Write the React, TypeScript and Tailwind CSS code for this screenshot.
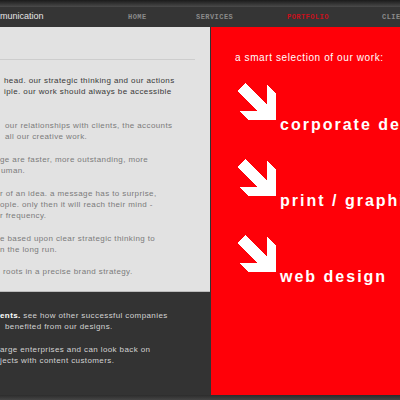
import React from "react";

const Arrow = () => (
  <svg
    width="40"
    height="38"
    viewBox="0 0 40 38"
    shapeRendering="crispEdges"
    className="block shrink-0"
  >
    <polygon
      points="8,0 30,22 30,2 39,11 39,37 11,37 2,28 20,28 0,8"
      fill="#ffffff"
    />
  </svg>
);

const works = ["corporate design", "print / graphics", "web design"];

type Line = { text: React.ReactNode; pl: string };

const intro: Line[][] = [
  [
    { text: "head. our strategic thinking and our actions", pl: "pl-[4px]" },
    { text: "iple. our work should always be accessible", pl: "pl-[4px]" },
  ],
];

const body: Line[][] = [
  [
    { text: "our relationships with clients, the accounts", pl: "pl-[5px]" },
    { text: "all our creative work.", pl: "pl-[5px]" },
  ],
  [
    { text: "ge are faster, more outstanding, more", pl: "pl-0" },
    { text: "uman.", pl: "pl-[1px]" },
  ],
  [
    { text: "r of an idea. a message has to surprise,", pl: "pl-0" },
    { text: "ople. only then it will reach their mind -", pl: "pl-0" },
    { text: "r frequency.", pl: "pl-0" },
  ],
  [
    { text: "e based upon clear strategic thinking to", pl: "pl-0" },
    { text: "n the long run.", pl: "pl-0" },
  ],
  [{ text: "roots in a precise brand strategy.", pl: "pl-[3px]" }],
];

const clients: Line[][] = [
  [
    {
      text: (
        <>
          <span className="font-bold text-white">ents.</span> see how other
          successful companies
        </>
      ),
      pl: "pl-0",
    },
    { text: "benefited from our designs.", pl: "pl-[5px]" },
  ],
  [
    { text: "arge enterprises and can look back on", pl: "pl-0" },
    { text: "jects with content customers.", pl: "pl-0" },
  ],
];

const Para = ({ lines, className }: { lines: Line[]; className: string }) => (
  <div className={className}>
    {lines.map((l, i) => (
      <div key={i} className={`whitespace-nowrap ${l.pl}`}>
        {l.text}
      </div>
    ))}
  </div>
);

export default function App() {
  return (
    <div className="w-[400px] h-[400px] overflow-hidden bg-[#333333] font-['Liberation_Sans',Arial,sans-serif]">
      {/* top shading */}
      <div className="h-[7px] bg-gradient-to-b from-[#1b1b1b] to-[#4b4b4b]" />

      {/* navigation */}
      <header className="h-[20px] bg-[#353535] flex items-center whitespace-nowrap overflow-hidden">
        <div className="w-[128px] shrink-0 text-[9px] text-[#e6e6e6]">munication</div>
        <nav className="flex font-['Liberation_Mono',monospace] text-[7px] font-bold tracking-[0.45px] leading-none">
          <a className="w-[68px] shrink-0 text-[#8a8a8a]">HOME</a>
          <a className="w-[91px] shrink-0 text-[#8a8a8a]">SERVICES</a>
          <a className="w-[95px] shrink-0 text-[#c8101c]">PORTFOLIO</a>
          <a className="shrink-0 text-[#8a8a8a]">CLIENTS</a>
        </nav>
      </header>

      <main className="flex h-[368px]">
        {/* left column */}
        <div className="w-[210px] shrink-0 flex flex-col">
          <section className="h-[265px] bg-[#e2e2e2] border-b border-[#bcbcbc] pt-[32px] overflow-hidden">
            <div className="w-[195px] h-px bg-[#cdcdcd]" />
            <div className="mt-[15px] text-[8px] leading-[11.25px] tracking-[0.4px]">
              {intro.map((p, i) => (
                <Para key={i} lines={p} className="text-[#383838] mb-[22.5px]" />
              ))}
              <div className="flex flex-col gap-[11.25px]">
                {body.map((p, i) => (
                  <Para key={i} lines={p} className="text-[#7b7b7b]" />
                ))}
              </div>
            </div>
          </section>
          <section className="flex-1 pt-[18px] text-[8px] leading-[11.25px] tracking-[0.4px] text-[#d2d2d2]">
            <div className="flex flex-col gap-[11.25px]">
              {clients.map((p, i) => (
                <Para key={i} lines={p} className="" />
              ))}
            </div>
          </section>
        </div>

        {/* portfolio panel */}
        <section className="ml-[1px] flex-1 bg-[#ff0008] pt-[24.5px] pl-[24px] overflow-hidden">
          <h2 className="text-[10px] leading-[12px] tracking-[0.6px] text-white whitespace-nowrap">
            a smart selection of our work:
          </h2>
          <ul className="mt-[19.5px] ml-[2px] flex flex-col gap-[26px]">
            {works.map((w) => (
              <li key={w} className="flex items-start whitespace-nowrap">
                <Arrow />
                <span className="ml-[3px] mt-[34px] text-[16px] leading-[16px] font-bold tracking-[2px] text-white">
                  {w}
                </span>
              </li>
            ))}
          </ul>
        </section>
      </main>

      {/* bottom shading */}
      <div className="h-[5px] bg-gradient-to-b from-[#2c2c2c] to-[#454545]" />
    </div>
  );
}
